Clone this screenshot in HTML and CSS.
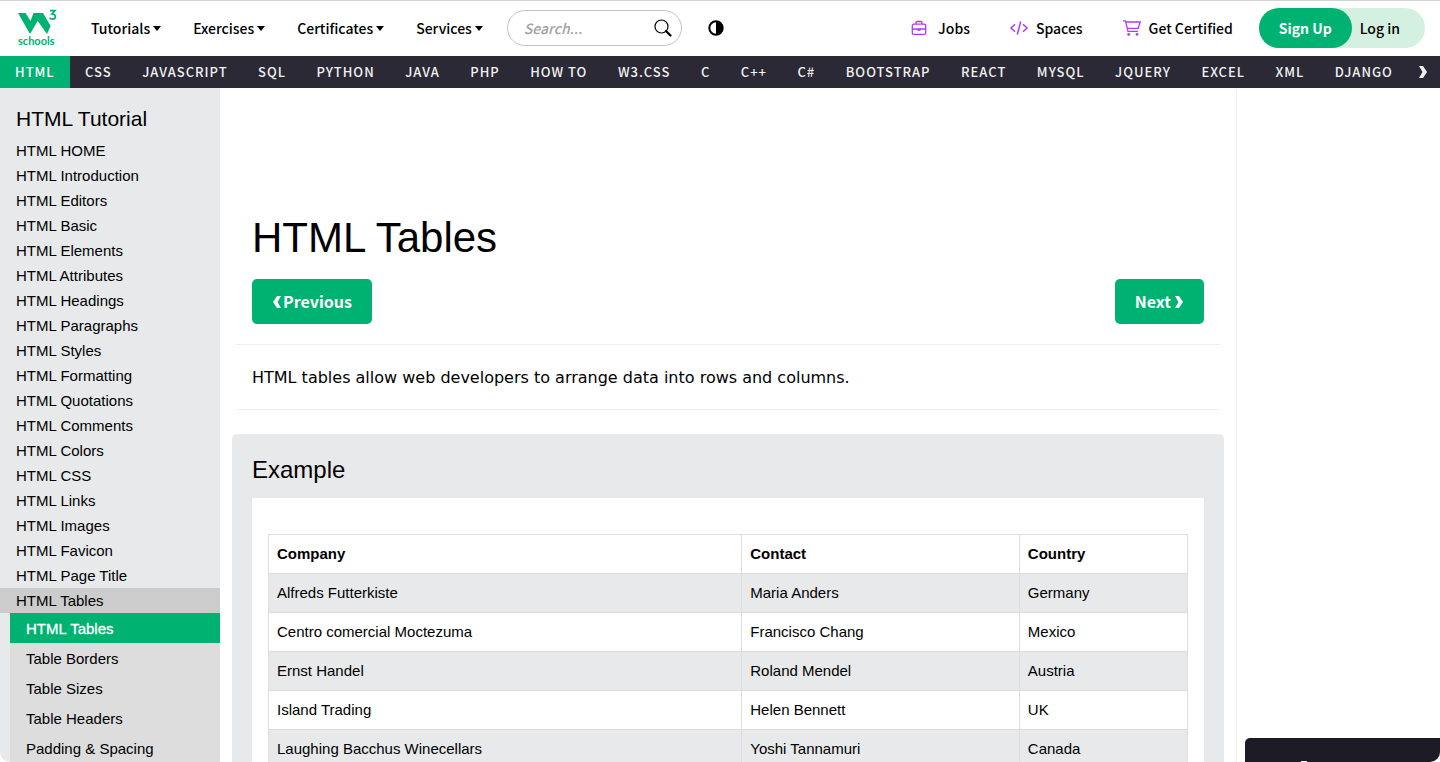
FILE: index.html
```html
<!DOCTYPE html>
<html lang="en">
<head>
<meta charset="utf-8">
<title>HTML Tables</title>
<meta name="viewport" content="width=device-width, initial-scale=1">
<link rel="stylesheet" href="styles.css">
</head>
<body>
<div class="page">
  <header class="topbar">
    <a class="logo" href="#" aria-label="schools home">
      <svg class="logo-mark" viewBox="0 0 40 26" aria-hidden="true">
        <path d="M1 4H8.500L13.500 12L16.500 4H26L33.700 17L30 25L20.700 12L13 25Z" fill="#00b271"/>
        <path d="M33 1.600H38L35 5C37.200 4.900 38.300 6 38.300 7.500C38.300 9.200 37 10.200 35.400 10.200C34 10.200 33.200 9.600 32.600 8.600" fill="none" stroke="#00b271" stroke-width="1.700"/>
      </svg>
      <span class="logo-word">schools</span>
    </a>
    <nav class="menu" aria-label="Main">
      <button class="menu-item" type="button">Tutorials<span class="caret"></span></button>
      <button class="menu-item" type="button">Exercises<span class="caret"></span></button>
      <button class="menu-item" type="button">Certificates<span class="caret"></span></button>
      <button class="menu-item" type="button">Services<span class="caret"></span></button>
    </nav>
    <form class="search">
      <input class="search-input" type="text" placeholder="Search..." aria-label="Search">
      <button class="search-button" type="button" aria-label="Search">
        <svg class="search-icon" viewBox="0 0 18 18" aria-hidden="true"><circle cx="7.500" cy="7.500" r="6.500" fill="none" stroke="#000" stroke-width="1.200"/><path d="M12 12L16.500 16.500" stroke="#000" stroke-width="2.200" stroke-linecap="round"/></svg>
      </button>
    </form>
    <button class="theme" type="button" aria-label="Toggle dark mode">
      <svg class="theme-icon" viewBox="0 0 16 16" aria-hidden="true"><circle cx="8" cy="8" r="6.700" fill="#fff" stroke="#000" stroke-width="2"/><path d="M8 1A7 7 0 0 1 8 15Z" fill="#000"/></svg>
    </button>
    <div class="actions">
      <a class="action" href="#"><svg class="action-icon" viewBox="0 0 16 16" aria-hidden="true"><g fill="none" stroke="#ad3bff" stroke-width="1.300"><rect x="1.300" y="4.200" width="13.400" height="10.200" rx="1.500"/><path d="M5 4V2.800Q5 1.500 6.200 1.500H9.800Q11 1.500 11 2.800V4M1.300 9H14.700"/></g><path d="M6 9H10V10L8 11.200L6 10Z" fill="#ad3bff"/></svg>Jobs</a>
      <a class="action" href="#"><svg class="action-icon wide" viewBox="0 0 20 16" aria-hidden="true"><path d="M6 4.200L2 8L6 11.800M14 4.200L18 8L14 11.800M11.700 1.500L8.300 14.500" fill="none" stroke="#ad3bff" stroke-width="1.500"/></svg>Spaces</a>
      <a class="action" href="#"><svg class="action-icon wide" viewBox="0 0 20 16" aria-hidden="true"><path d="M1 .8H3.500L6 11.300H16M4 2H18.200L16.200 8.300H5.200" fill="none" stroke="#ad3bff" stroke-width="1.300"/><circle cx="6.700" cy="14.400" r="1.400" fill="#ad3bff"/><circle cx="15" cy="14.400" r="1.400" fill="#ad3bff"/></svg>Get Certified</a>
    </div>
    <div class="account"><a class="signup" href="#">Sign Up</a><a class="login" href="#">Log in</a></div>
  </header>
  <nav class="subnav" aria-label="Topics">
    <div class="topics">
      <a class="topic current" href="#">HTML</a><a class="topic" href="#">CSS</a><a class="topic" href="#">JAVASCRIPT</a><a class="topic" href="#">SQL</a><a class="topic" href="#">PYTHON</a><a class="topic" href="#">JAVA</a><a class="topic" href="#">PHP</a><a class="topic" href="#">HOW TO</a><a class="topic" href="#">W3.CSS</a><a class="topic" href="#">C</a><a class="topic" href="#">C++</a><a class="topic" href="#">C#</a><a class="topic" href="#">BOOTSTRAP</a><a class="topic" href="#">REACT</a><a class="topic" href="#">MYSQL</a><a class="topic" href="#">JQUERY</a><a class="topic" href="#">EXCEL</a><a class="topic" href="#">XML</a><a class="topic" href="#">DJANGO</a>
    </div>
    <button class="more" type="button" aria-label="More topics"><svg class="chevron" viewBox="0 0 10 14" aria-hidden="true"><path d="M1 1H5L9 7L5 13H1L4.500 7Z" fill="currentColor"/></svg></button>
  </nav>
  <div class="body">
    <aside class="sidebar">
      <h2 class="side-title">HTML Tutorial</h2>
      <a class="side-link" href="#">HTML HOME</a>
      <a class="side-link" href="#">HTML Introduction</a>
      <a class="side-link" href="#">HTML Editors</a>
      <a class="side-link" href="#">HTML Basic</a>
      <a class="side-link" href="#">HTML Elements</a>
      <a class="side-link" href="#">HTML Attributes</a>
      <a class="side-link" href="#">HTML Headings</a>
      <a class="side-link" href="#">HTML Paragraphs</a>
      <a class="side-link" href="#">HTML Styles</a>
      <a class="side-link" href="#">HTML Formatting</a>
      <a class="side-link" href="#">HTML Quotations</a>
      <a class="side-link" href="#">HTML Comments</a>
      <a class="side-link" href="#">HTML Colors</a>
      <a class="side-link" href="#">HTML CSS</a>
      <a class="side-link" href="#">HTML Links</a>
      <a class="side-link" href="#">HTML Images</a>
      <a class="side-link" href="#">HTML Favicon</a>
      <a class="side-link" href="#">HTML Page Title</a>
      <a class="side-link open" href="#">HTML Tables</a>
      <div class="side-group">
        <a class="sub-link active" href="#">HTML Tables</a>
        <a class="sub-link" href="#">Table Borders</a>
        <a class="sub-link" href="#">Table Sizes</a>
        <a class="sub-link" href="#">Table Headers</a>
        <a class="sub-link" href="#">Padding &amp; Spacing</a>
      </div>
    </aside>
    <main class="content">
      <h1 class="title">HTML Tables</h1>
      <div class="pager">
        <a class="page-button previous" href="#"><svg class="chevron" viewBox="0 0 10 14" aria-hidden="true"><path d="M9 1H5L1 7L5 13H9L5.500 7Z" fill="currentColor"/></svg>Previous</a>
        <a class="page-button" href="#">Next<svg class="chevron" viewBox="0 0 10 14" aria-hidden="true"><path d="M1 1H5L9 7L5 13H1L4.500 7Z" fill="currentColor"/></svg></a>
      </div>
      <hr class="rule">
      <p class="intro">HTML tables allow web developers to arrange data into rows and columns.</p>
      <hr class="rule">
      <section class="example">
        <h3 class="example-title">Example</h3>
        <div class="sheet">
          <table class="companies">
            <thead><tr><th class="company">Company</th><th class="contact">Contact</th><th>Country</th></tr></thead>
            <tbody>
              <tr><td>Alfreds Futterkiste</td><td>Maria Anders</td><td>Germany</td></tr>
              <tr><td>Centro comercial Moctezuma</td><td>Francisco Chang</td><td>Mexico</td></tr>
              <tr><td>Ernst Handel</td><td>Roland Mendel</td><td>Austria</td></tr>
              <tr><td>Island Trading</td><td>Helen Bennett</td><td>UK</td></tr>
              <tr><td>Laughing Bacchus Winecellars</td><td>Yoshi Tannamuri</td><td>Canada</td></tr>
            </tbody>
          </table>
        </div>
      </section>
    </main>
    <aside class="rail"><div class="promo"><span class="promo-mark"></span></div></aside>
  </div>
</div>
</body>
</html>
```
FILE: styles.css
```css
* { box-sizing: border-box; }

body {
  margin: 0;
  background: #fff;
  color: #000;
  font: 15px/22px "Liberation Sans", Arial, sans-serif;
}

a { color: inherit; text-decoration: none; }

button {
  padding: 0;
  border: 0;
  background: none;
  color: inherit;
  font: inherit;
}

h1, h2, h3 { margin: 0; font-weight: 400; }

.page {
  display: flex;
  flex-direction: column;
  height: 100vh;
  overflow: hidden;
  border-radius: 0 0 10px 10px;
}

.topbar {
  display: flex;
  flex: none;
  align-items: center;
  height: 56px;
  padding: 0 15px 1px 0;
  border-top: 1px solid #d3d3d3;
  font: 500 14px/24px "Noto Sans CJK SC", "Noto Sans", sans-serif;
  white-space: nowrap;
}

.logo {
  display: flex;
  flex-direction: column;
  width: 40px;
  margin-left: 17px;
  color: #00b271;
}

.logo-mark { width: 40px; height: 26px; }

.logo-word { padding-left: 1px; font: 700 11px/12px Lato, sans-serif; }

.menu { display: flex; gap: 32px; margin-left: 34px; }

.menu-item { display: flex; align-items: center; gap: 3px; }

.caret {
  border: solid transparent;
  border-width: 5px 4px 0;
  border-top-color: #000;
}

.search {
  display: flex;
  align-items: center;
  width: 175px;
  height: 36px;
  margin-left: 24px;
  padding: 0 9px 0 16px;
  border: 1px solid #c4c4c4;
  border-radius: 18px;
}

.search-input {
  flex: 1;
  min-width: 0;
  padding: 0;
  border: 0;
  outline: 0;
  background: none;
  font: italic 500 14px/24px "Noto Sans CJK SC", "Noto Sans", sans-serif;
}

.search-input::placeholder { color: #a3a3a3; }

.search-icon { display: block; width: 18px; height: 18px; }

.theme { margin-left: 26px; }

.theme-icon { display: block; width: 16px; height: 16px; }

.actions { display: flex; gap: 39px; margin-left: auto; }

.action { display: flex; align-items: center; }

.action-icon { width: 16px; height: 16px; margin-right: 11px; }

.wide { width: 20px; margin-right: 7px; }

.account {
  display: flex;
  margin-left: 26px;
  border-radius: 20px;
  background: #d4f0e1;
  line-height: 40px;
}

.signup {
  padding: 0 20px;
  border-radius: 20px;
  background: #00b271;
  color: #fff;
  font-weight: 700;
}

.login { padding: 0 25px 0 8px; }

.subnav {
  display: flex;
  flex: none;
  height: 32px;
  background: #2a2935;
  color: #f1f1f1;
  font: 500 13px/32px "Noto Sans CJK SC", "Noto Sans", sans-serif;
  letter-spacing: 1px;
  white-space: nowrap;
}

.topics {
  display: flex;
  flex: 1;
  justify-content: space-between;
  min-width: 0;
  overflow: hidden;
}

.topic { flex: none; padding: 0 15px; }

.current { background: #00b271; color: #fff; }

.more { flex: none; padding: 0 12px 0 10px; }

.chevron { display: block; width: 10px; height: 14px; }

.body { display: flex; flex: 1; min-height: 0; }

.sidebar {
  flex: none;
  width: 220px;
  padding-top: 16px;
  background: #e7e9eb;
  overflow: hidden;
}

.side-title { padding: 0 16px; margin-bottom: 4px; font-size: 21px; line-height: 30px; }

.side-link { display: block; padding: 0 16px; line-height: 25px; }

.open { background: #ccc; }

.side-group { margin-left: 10px; background: #ddd; }

.sub-link { display: block; padding: 2px 16px 0; line-height: 28px; }

.active { background: #00b271; color: #fff; -webkit-text-stroke: 0.3px #fff; }

.content { flex: 1; min-width: 0; padding: 118px 16px 0; overflow: hidden; }

.title { padding: 0 16px; font-size: 42px; line-height: 64px; }

.pager { display: flex; justify-content: space-between; padding: 9px 16px 20px; }

.page-button {
  display: flex;
  align-items: center;
  gap: 3px;
  height: 45px;
  padding: 0 20px;
  border-radius: 5px;
  background: #00b271;
  color: #fff;
  font: 700 16px/45px "Noto Sans CJK SC", "Noto Sans", sans-serif;
}

.previous { gap: 1px; }

.rule { margin: 0; border: 0; border-top: 1px solid #eee; }

.intro {
  margin: 0;
  padding: 21px 16px 19px;
  font: 16px/24px "DejaVu Sans", Verdana, sans-serif;
}

.example {
  margin: 24px -4px 0;
  padding: 20px;
  border-radius: 5px;
  background: #e7e9eb;
}

.example-title { margin-bottom: 12px; font-size: 24px; line-height: 32px; }

.sheet { padding: 36px 16px; background: #fff; }

.companies { width: 100%; border-collapse: collapse; }

.companies th,
.companies td {
  padding: 8px;
  border: 1px solid #ddd;
  text-align: left;
}

.companies tbody tr:nth-child(odd) { background: #e7e9eb; }

.company { width: 51.5%; }

.contact { width: 30.2%; }

.rail {
  display: flex;
  flex: none;
  flex-direction: column;
  justify-content: flex-end;
  width: 204px;
  margin-top: 2px;
  padding-left: 8px;
  border-left: 1px solid #eee;
}

.promo {
  display: flex;
  align-items: flex-end;
  height: 24px;
  padding-left: 56px;
  border-radius: 5px 0 0 0;
  background: #1c1b26;
}

.promo-mark { width: 6px; height: 1px; background: #fff; }
```
